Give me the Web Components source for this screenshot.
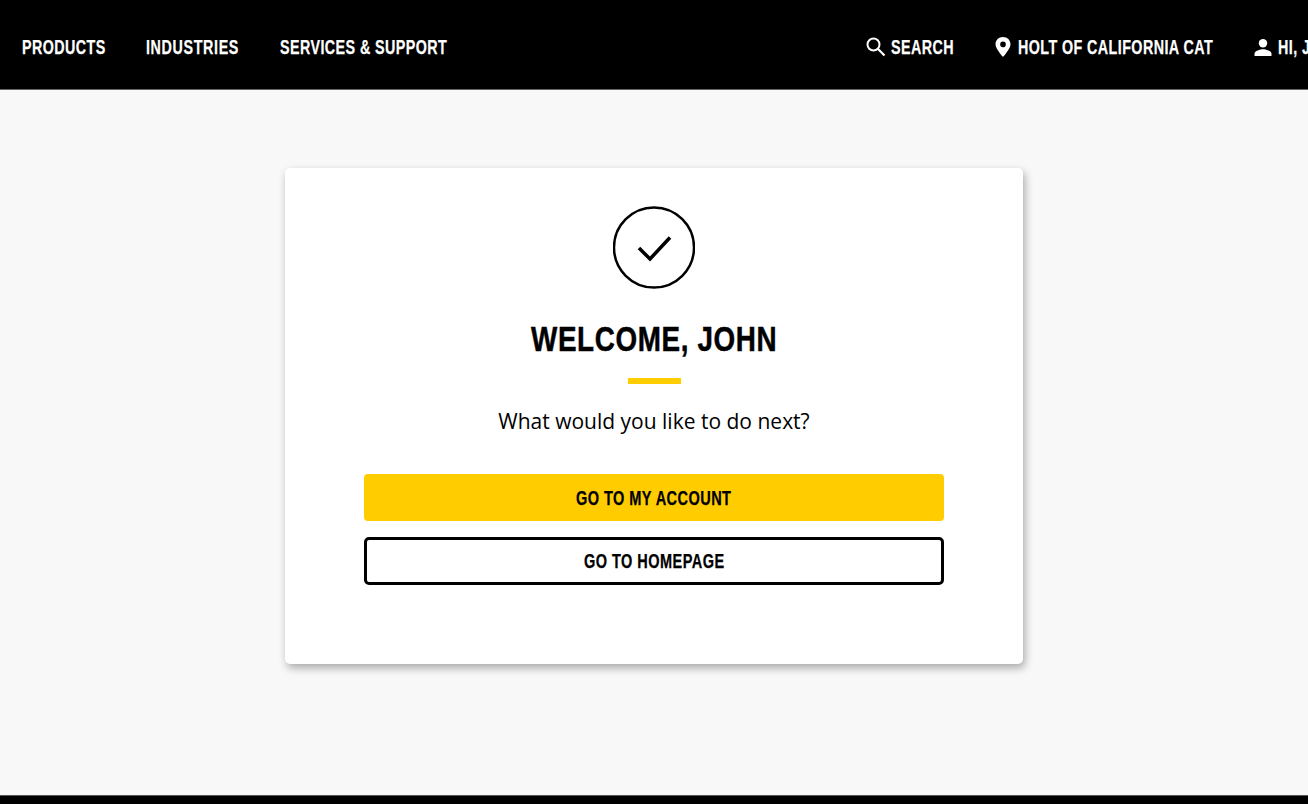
<!DOCTYPE html>
<html>
<head>
<meta charset="utf-8">
<title>Welcome</title>
<style>
  html, body { margin: 0; height: 100%; }
  body { font-family: "Liberation Sans", sans-serif; overflow: hidden; }
</style>
</head>
<body>
<app-page>
  <site-header slot="header">
    <nav-link slot="left">PRODUCTS</nav-link>
    <nav-link slot="left" style="letter-spacing:.9px;margin-right:1px">INDUSTRIES</nav-link>
    <nav-link slot="left">SERVICES &amp; SUPPORT</nav-link>
    <nav-link slot="right" icon="search" style="margin-right:41px;gap:5px">SEARCH</nav-link>
    <nav-link slot="right" icon="pin" style="margin-right:41px;gap:7px">HOLT OF CALIFORNIA CAT</nav-link>
    <nav-link slot="right" icon="person">HI, JOHN</nav-link>
  </site-header>
  <welcome-card slot="main" name="JOHN">
    <action-button slot="actions" kind="primary">GO TO MY ACCOUNT</action-button>
    <action-button slot="actions" kind="outline">GO TO HOMEPAGE</action-button>
  </welcome-card>
</app-page>

<script>
const icons = {
  search: `<svg width="20" height="20" viewBox="0 0 20 20" fill="none" stroke="#fff" stroke-width="2"><circle cx="7.500" cy="7.500" r="6"/><path d="M11.800 11.800l6.700 6.700" stroke-width="2.200"/></svg>`,
  pin: `<svg width="16" height="20" viewBox="0 0 16 20"><path fill="#fff" fill-rule="evenodd" d="M8 0C3.600 0 .5 3.200.5 7.300.5 12 8 20 8 20s7.500-8 7.500-12.700C15.500 3.200 12.400 0 8 0zm0 4.600a2.800 2.800 0 110 5.600 2.800 2.800 0 010-5.600z"/></svg>`,
  person: `<svg width="18" height="17" viewBox="0 0 18 17" fill="#fff"><circle cx="9" cy="4.300" r="4.200"/><path d="M.5 17v-2.300c0-3 5.700-4.500 8.500-4.500s8.500 1.500 8.500 4.500V17z"/></svg>`
};

class AppPage extends HTMLElement {
  constructor() {
    super();
    this.attachShadow({ mode: "open" }).innerHTML = `
      <style>
        :host { display: flex; flex-direction: column; height: 804px; background: #f8f8f8; }
        main { flex: 1; display: flex; justify-content: center; align-items: flex-start; padding-top: 78px; }
        footer { height: 9px; background: #000; border-top: 1px solid #555; box-sizing: border-box; }
      </style>
      <slot name="header"></slot>
      <main><slot name="main"></slot></main>
      <footer></footer>
    `;
  }
}

class SiteHeader extends HTMLElement {
  constructor() {
    super();
    this.attachShadow({ mode: "open" }).innerHTML = `
      <style>
        :host { display: flex; height: 90px; box-sizing: border-box; background: #000; border-bottom: 1px solid #666; padding: 0 0 0 22px; overflow: hidden; align-items: flex-start; }
        .left { display: flex; gap: 40px; flex: 1 1 0; padding-top: 36px; }
        .right { display: flex; flex: none; margin-right: -35px; padding-top: 36px; }
      </style>
      <div class="left"><slot name="left"></slot></div>
      <div class="right"><slot name="right"></slot></div>
    `;
  }
}

class NavLink extends HTMLElement {
  constructor() {
    super();
    const icon = icons[this.getAttribute("icon")] || "";
    this.attachShadow({ mode: "open" }).innerHTML = `
      <style>
        :host { display: inline-flex; align-items: center; gap: 6px; height: 22px; color: #fff; font: bold 20px/22px "Liberation Sans", sans-serif; letter-spacing: .6px; -webkit-text-stroke: .25px #fff; white-space: nowrap; }
        svg { display: block; }
      </style>
      ${icon}<cond-text ratio="0.715"><slot></slot></cond-text>
    `;
  }
}

class WelcomeCard extends HTMLElement {
  constructor() {
    super();
    const name = this.getAttribute("name");
    this.attachShadow({ mode: "open" }).innerHTML = `
      <style>
        :host { display: flex; flex-direction: column; align-items: center; box-sizing: border-box; width: 738px; height: 496px; padding: 38px 79px 0; background: #fff; border-radius: 5px; box-shadow: 2px 4px 8px rgba(0,0,0,.32); }
        .check { display: block; }
        h1 { margin: 29px 0 0; font: bold 35px/44px "Liberation Sans", sans-serif; letter-spacing: .8px; -webkit-text-stroke: .5px #000; color: #000; }
        .rule { width: 53px; height: 6px; background: #ffcc00; margin-top: 17px; }
        p { margin: 24px 0 0; font: 21px/27px "Open Sans", sans-serif; color: #000; }
        .actions { display: flex; flex-direction: column; gap: 16px; align-self: stretch; margin-top: 39px; }
      </style>
      <svg class="check" width="82" height="83" viewBox="0 0 82 83" fill="none" stroke="#000" style="margin-bottom:-1px">
        <circle cx="41" cy="41.500" r="40" stroke-width="2.500"/>
        <path d="M26 42l11 11L57 31.500" stroke-width="3.500"/>
      </svg>
      <h1><cond-text ratio="0.795">WELCOME, ${name}</cond-text></h1>
      <div class="rule"></div>
      <p>What would you like to do next?</p>
      <div class="actions"><slot name="actions"></slot></div>
    `;
  }
}

class ActionButton extends HTMLElement {
  constructor() {
    super();
    this.attachShadow({ mode: "open" }).innerHTML = `
      <style>
        :host { display: flex; align-items: center; justify-content: center; box-sizing: border-box; height: 47px; border-radius: 4px; color: #000; font: bold 19.500px/22px "Liberation Sans", sans-serif; letter-spacing: .6px; -webkit-text-stroke: .25px #000; cursor: pointer; }
        :host([kind="primary"]) { background: #ffcc00; }
        :host([kind="outline"]) { height: 48px; background: #fff; border: 3px solid #000; border-radius: 5px; }
      </style>
      <cond-text ratio="0.745"><slot></slot></cond-text>
    `;
  }
}

// no condensed family is installed, so squeeze the real text and give the host the squeezed width
class CondText extends HTMLElement {
  constructor() {
    super();
    this.attachShadow({ mode: "open" }).innerHTML = `
      <style>
        :host { display: inline-block; white-space: nowrap; vertical-align: top; }
        span { display: inline-block; transform-origin: 0 50%; }
      </style>
      <span><slot></slot></span>
    `;
  }
  connectedCallback() {
    const ratio = parseFloat(this.getAttribute("ratio"));
    const span = this.shadowRoot.querySelector("span");
    span.style.transform = `scaleX(${ratio})`;
    this.style.width = span.offsetWidth * ratio + "px";
  }
}

customElements.define("app-page", AppPage);
customElements.define("site-header", SiteHeader);
customElements.define("nav-link", NavLink);
customElements.define("welcome-card", WelcomeCard);
customElements.define("action-button", ActionButton);
customElements.define("cond-text", CondText);
</script>
</body>
</html>
